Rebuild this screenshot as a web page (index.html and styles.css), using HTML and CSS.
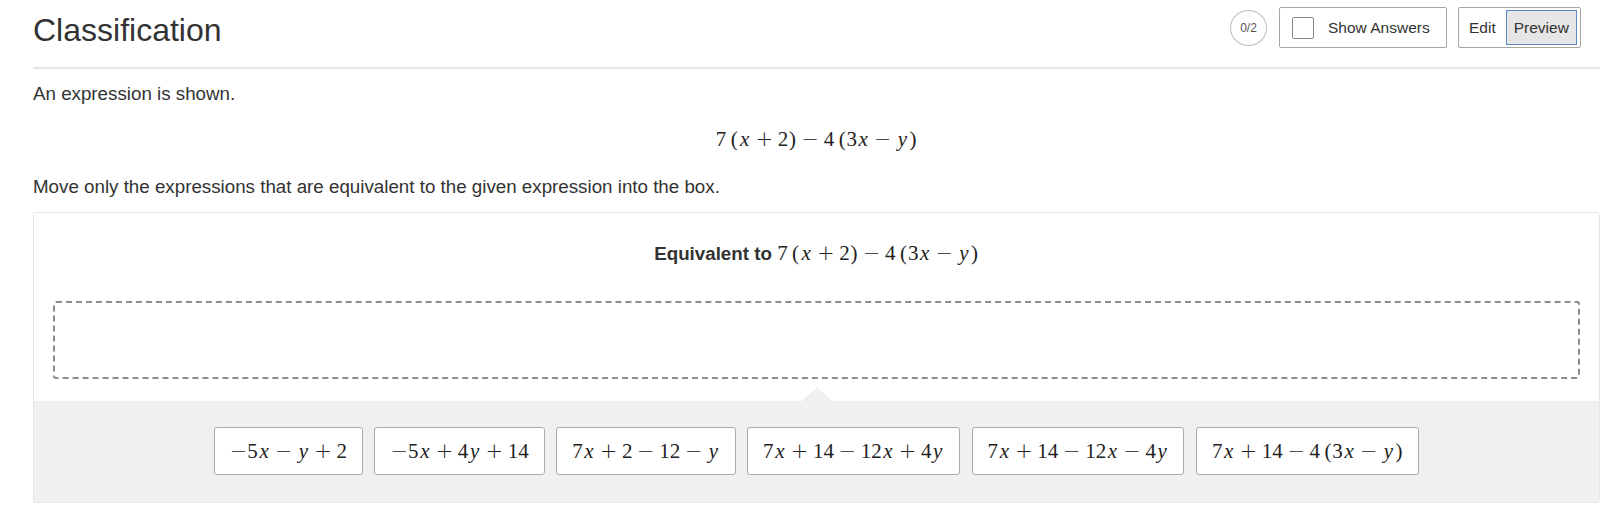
FILE: index.html
```html
<!DOCTYPE html>
<html lang="en">
<head>
<meta charset="utf-8">
<title>Classification</title>
<link rel="stylesheet" href="styles.css">
</head>
<body>
<div class="page">
  <header class="header">
    <h1 class="title">Classification</h1>
    <div class="controls">
      <div class="score">0/2</div>
      <button class="show-answers"><span class="checkbox"></span><span>Show Answers</span></button>
      <div class="mode-toggle"><span class="mode">Edit</span><span class="mode active">Preview</span></div>
    </div>
  </header>

  <p class="text intro">An expression is shown.</p>

  <div class="math display"><span class="mn">7</span><span class="mp ts">(</span><span class="mi">x</span><span class="mo">+</span><span class="mn">2</span><span class="mp">)</span><span class="mo">−</span><span class="mn">4</span><span class="mp ts">(</span><span class="mn">3</span><span class="mi">x</span><span class="mo">−</span><span class="mi">y</span><span class="mp">)</span></div>

  <p class="text prompt">Move only the expressions that are equivalent to the given expression into the box.</p>

  <section class="card">
    <div class="card-top">
      <div class="category-title">Equivalent to <span class="math"><span class="mn">7</span><span class="mp ts">(</span><span class="mi">x</span><span class="mo">+</span><span class="mn">2</span><span class="mp">)</span><span class="mo">−</span><span class="mn">4</span><span class="mp ts">(</span><span class="mn">3</span><span class="mi">x</span><span class="mo">−</span><span class="mi">y</span><span class="mp">)</span></span></div>
      <div class="dropzone"></div>
    </div>
    <div class="bank">
      <div class="tile"><span class="math"><span class="mo un">−</span><span class="mn">5</span><span class="mi">x</span><span class="mo">−</span><span class="mi">y</span><span class="mo">+</span><span class="mn">2</span></span></div>
      <div class="tile"><span class="math"><span class="mo un">−</span><span class="mn">5</span><span class="mi">x</span><span class="mo">+</span><span class="mn">4</span><span class="mi">y</span><span class="mo">+</span><span class="mn">14</span></span></div>
      <div class="tile"><span class="math"><span class="mn">7</span><span class="mi">x</span><span class="mo">+</span><span class="mn">2</span><span class="mo">−</span><span class="mn">12</span><span class="mo">−</span><span class="mi">y</span></span></div>
      <div class="tile"><span class="math"><span class="mn">7</span><span class="mi">x</span><span class="mo">+</span><span class="mn">14</span><span class="mo">−</span><span class="mn">12</span><span class="mi">x</span><span class="mo">+</span><span class="mn">4</span><span class="mi">y</span></span></div>
      <div class="tile"><span class="math"><span class="mn">7</span><span class="mi">x</span><span class="mo">+</span><span class="mn">14</span><span class="mo">−</span><span class="mn">12</span><span class="mi">x</span><span class="mo">−</span><span class="mn">4</span><span class="mi">y</span></span></div>
      <div class="tile"><span class="math"><span class="mn">7</span><span class="mi">x</span><span class="mo">+</span><span class="mn">14</span><span class="mo">−</span><span class="mn">4</span><span class="mp ts">(</span><span class="mn">3</span><span class="mi">x</span><span class="mo">−</span><span class="mi">y</span><span class="mp">)</span></span></div>
    </div>
  </section>
</div>
</body>
</html>
```

FILE: styles.css
```css
* {
  box-sizing: border-box;
}

body {
  margin: 0;
  background: #ffffff;
  color: #333333;
  font-family: "Liberation Sans", Arial, sans-serif;
}

.page {
  margin: 0 13px 0 33px;
}

/* Header */
.header {
  display: flex;
  justify-content: space-between;
  align-items: flex-start;
  height: 69px;
  padding: 7px 19px 0 0;
  border-bottom: 2px solid #e6e6e6;
}

.title {
  margin: 0;
  padding-top: 3px;
  font-size: 32px;
  font-weight: normal;
  line-height: 41px;
  color: #333333;
}

.controls {
  display: flex;
  align-items: center;
  height: 41px;
}

.score {
  width: 37px;
  height: 36px;
  border: 1.5px solid #bdbdbd;
  border-radius: 50%;
  display: flex;
  align-items: center;
  justify-content: center;
  font-size: 12px;
  color: #555555;
  margin-right: 12px;
}

.show-answers {
  display: flex;
  align-items: center;
  height: 41px;
  width: 168px;
  padding: 0 0 0 12px;
  border: 1px solid #a6a6a6;
  border-radius: 2px;
  background: #ffffff;
  font-family: "Liberation Sans", Arial, sans-serif;
  font-size: 15.5px;
  color: #333333;
  margin-right: 11px;
}

.checkbox {
  width: 22px;
  height: 22px;
  border: 1.5px solid #8a8a8a;
  border-radius: 2px;
  margin-right: 14px;
  background: #ffffff;
}

.mode-toggle {
  display: flex;
  align-items: stretch;
  height: 41px;
  width: 123px;
  padding: 2px 3px 2px 0;
  border: 1px solid #a6a6a6;
  border-radius: 2px;
  font-size: 15.5px;
}

.mode {
  display: flex;
  align-items: center;
  padding: 0 10px 0 10px;
}

.mode.active {
  flex: 1;
  padding: 0 6px 0 7px;
  border: 1px solid #5b8ac4;
  background: #e6e6e6;
}

/* Text */
.text {
  margin: 0;
  font-size: 18.75px;
  line-height: 27px;
  color: #333333;
}

.intro {
  margin-top: 11px;
}

.prompt {
  margin-top: 19px;
}

/* Math */
.math {
  font-family: "Liberation Serif", "Times New Roman", serif;
  font-size: 21px;
  color: #222222;
  white-space: nowrap;
  font-weight: normal;
}

.display {
  margin-top: 17px;
  line-height: 30px;
  text-align: center;
}

.mi {
  font-style: italic;
  padding: 0 1.6px;
}

.mp {
  padding: 0 0.8px;
}

.ts {
  margin-left: 3.7px;
}

.mo {
  font-family: "DejaVu Sans", sans-serif;
  font-weight: 200;
  margin: 0 4.6px;
}

.mo.un {
  margin: 0;
}

/* Card */
.card {
  margin-top: 12px;
  border: 1px solid #e6e6e6;
  border-radius: 3px;
  overflow: hidden;
}

.card-top {
  padding: 25px 19px 22px;
  background: #ffffff;
}

.category-title {
  text-align: center;
  font-size: 18.75px;
  font-weight: bold;
  line-height: 30px;
  color: #333333;
}

.dropzone {
  margin-top: 32px;
  height: 78px;
  border: 2px dashed #8c8c8c;
  border-radius: 3px;
}

.bank {
  position: relative;
  display: flex;
  justify-content: center;
  gap: 11.5px;
  padding: 26px 0 27px;
  background: #f0f0f0;
}

.bank::before {
  content: "";
  position: absolute;
  top: -14px;
  left: 50%;
  transform: translateX(-50%);
  border-left: 15px solid transparent;
  border-right: 15px solid transparent;
  border-bottom: 14px solid #f0f0f0;
}

.tile {
  display: flex;
  align-items: center;
  height: 48px;
  padding: 0 15px;
  background: #ffffff;
  border: 1px solid #ababab;
  border-radius: 3px;
}
```
